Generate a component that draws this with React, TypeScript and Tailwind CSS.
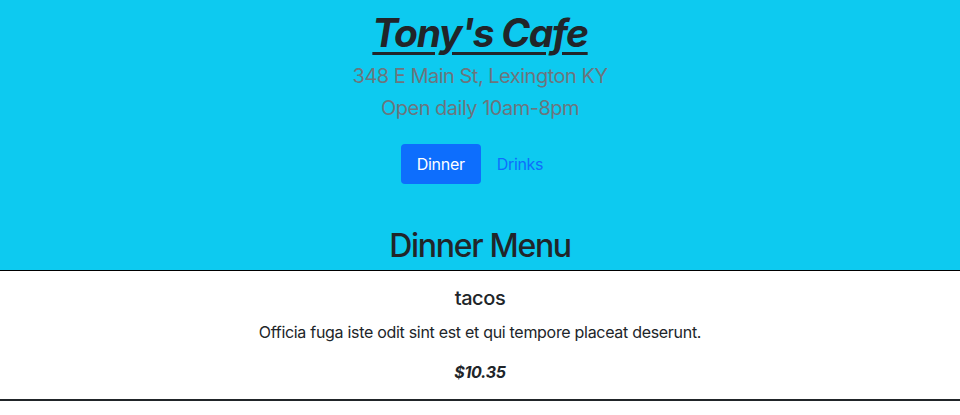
export default function App() {
  return (
    <div className="min-h-screen bg-white text-[#212529] font-['Inter','Liberation_Sans',sans-serif]">
      <header className="bg-[#0dcaf0] pt-[10px] flex flex-col items-center border-b border-black">
        <h1 className="text-[39px] leading-[46px] font-bold italic underline underline-offset-[5px] decoration-[3px] tracking-[-1.3px] mb-2">
          Tony's Cafe
        </h1>
        <h5 className="text-[20px] leading-6 text-[#6c757d] tracking-[-0.5px] mb-2">348 E Main St, Lexington KY</h5>
        <h5 className="text-[20px] leading-6 text-[#6c757d] tracking-[-0.5px] mb-2">Open daily 10am-8pm</h5>
        <nav className="flex mt-4 tracking-[-0.3px]">
          <button className="bg-[#0d6efd] text-white rounded-[4px] px-4 py-2 text-base leading-6">Dinner</button>
          <button className="text-[#0d6efd] px-4 py-2 text-base leading-6">Drinks</button>
        </nav>
        <h2 className="text-[32px] leading-[38px] font-medium tracking-[-1.3px] mt-[43px] mb-[5px]">Dinner Menu</h2>
      </header>
      <section className="flex flex-col items-center pt-[15px] border-b-2 border-[#212529]">
        <h5 className="text-[20px] leading-6 font-medium tracking-[-0.4px] mb-[10px]">tacos</h5>
        <p className="text-base leading-6 tracking-[-0.3px] mb-4">Officia fuga iste odit sint est et qui tempore placeat deserunt.</p>
        <p className="text-base leading-6 font-bold italic tracking-[-0.3px] mb-[15px]">$10.35</p>
      </section>
    </div>
  );
}
